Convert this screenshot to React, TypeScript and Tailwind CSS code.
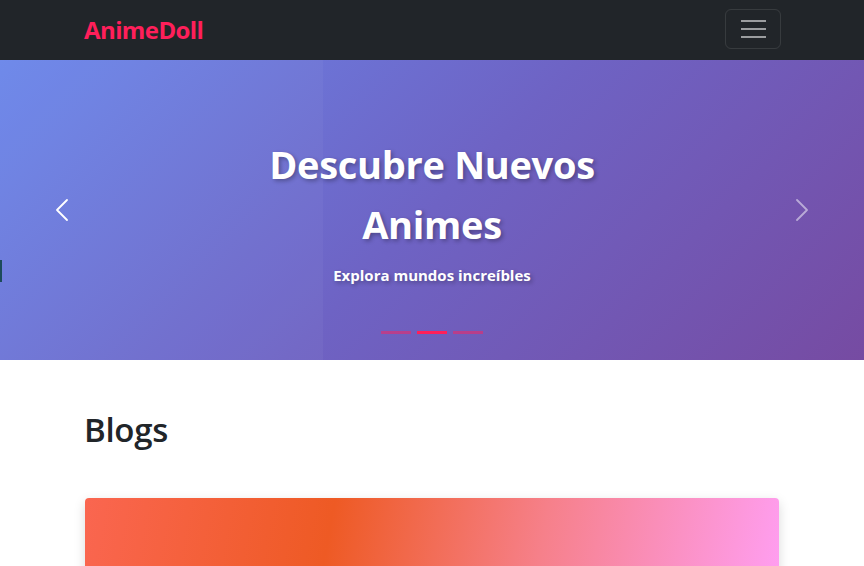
import { ChevronLeft, ChevronRight } from "lucide-react";

export default function App() {
  const font = { fontFamily: '"Open Sans", "Noto Sans", sans-serif' };
  return (
    <div className="min-h-screen bg-white" style={font}>
      <nav className="bg-[#212529] h-[60px]">
        <div className="mx-auto w-[720px] px-3 h-full flex items-center justify-between">
          <a className="text-[24px] font-bold text-[#ff1f5a] tracking-[-0.6px]">AnimeDoll</a>
          <button className="w-[56px] h-[40px] mr-[-1px] mb-[2px] rounded-md border border-white/10 flex flex-col items-center justify-center gap-[6px]">
            <span className="block w-[25px] h-[2px] bg-white/55" />
            <span className="block w-[25px] h-[2px] bg-white/55" />
            <span className="block w-[25px] h-[2px] bg-white/55" />
          </button>
        </div>
      </nav>

      <section className="relative h-[300px] bg-[linear-gradient(135deg,#6a86ea_0%,#6e63c4_50%,#764ba2_100%)] overflow-hidden">
        <div className="absolute left-0 top-0 h-full w-[323px] bg-white/[0.04]" />
        <div className="absolute left-0 top-[200px] w-[2px] h-[22px] bg-[#1d4b5a]" />
        <button className="absolute left-[42px] top-[130px] text-white">
          <ChevronLeft size={40} strokeWidth={1.1} />
        </button>
        <button className="absolute right-[42px] top-[130px] text-white/50">
          <ChevronRight size={40} strokeWidth={1.1} />
        </button>
        <div className="relative flex flex-col items-center pt-[74px] text-white">
          <h1 className="text-[38px] font-bold leading-[60px] text-center w-[360px] tracking-[-0.3px] [text-shadow:2px_2px_4px_rgba(0,0,0,0.3)]">
            Descubre Nuevos Animes
          </h1>
          <p className="mt-[10px] text-[15px] font-bold [text-shadow:2px_2px_4px_rgba(0,0,0,0.3)]">
            Explora mundos increíbles
          </p>
          <div className="mt-[44px] flex gap-[6px]">
            <span className="block w-[30px] h-[3px] bg-[#ff1f5a]/50" />
            <span className="block w-[30px] h-[3px] bg-[#ff1f5a]" />
            <span className="block w-[30px] h-[3px] bg-[#ff1f5a]/50" />
          </div>
        </div>
      </section>

      <section className="mx-auto w-[720px] px-3 pt-[48px]">
        <h2 className="text-[33px] font-semibold text-[#212529] leading-[44px] tracking-[-0.3px]">Blogs</h2>
        <div className="mt-[46px] mx-px h-[120px] rounded-t-sm shadow-[0_4px_12px_rgba(0,0,0,0.15)] bg-[linear-gradient(100deg,#fa6650_0%,#ee5a24_35%,#f6808a_65%,#ff9ff3_100%)]" />
      </section>
    </div>
  );
}
